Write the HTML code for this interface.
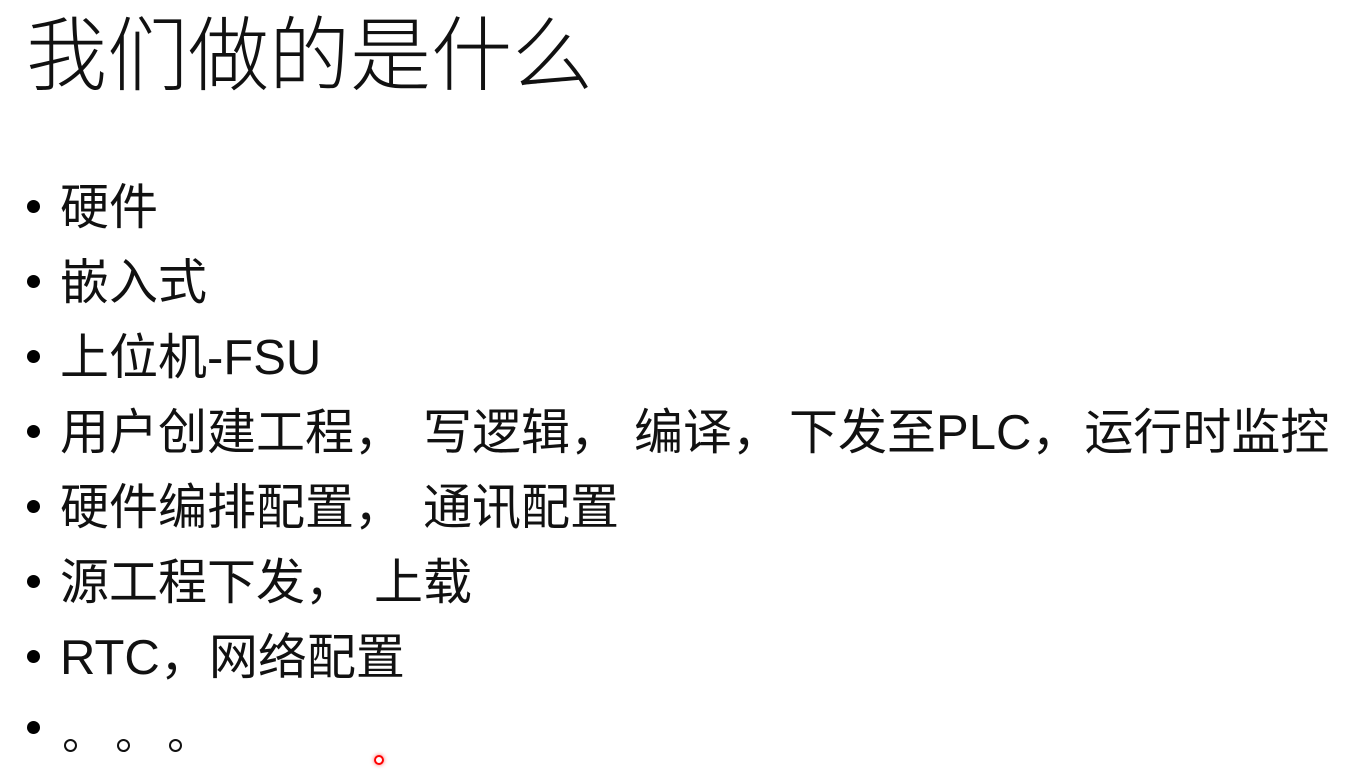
<!DOCTYPE html>
<html><head><meta charset="utf-8"><style>
html,body{margin:0;padding:0;background:#fff;width:1369px;height:772px;overflow:hidden;position:relative}
body{font-family:"Liberation Sans","Noto Sans CJK SC",sans-serif;color:#111}
.t{position:absolute;left:26px;top:9px;font-size:81px;line-height:96px;white-space:nowrap;font-weight:300}
.l{position:absolute;left:60px;font-size:49px;line-height:74px;height:74px;white-space:pre}
.b{position:absolute;left:27px;width:13px;height:13px;border-radius:50%;background:#000}
.o{position:absolute;width:9px;height:9px;border:2px solid #111;border-radius:50%}
.s{display:inline-block;width:20px}
</style></head><body>
<div class="t">我们做的是什么</div>
<div class="b" style="top:200px"></div><div class="l" style="top:171px">硬件</div>
<div class="b" style="top:275px"></div><div class="l" style="top:246px">嵌入式</div>
<div class="b" style="top:350px"></div><div class="l" style="top:321px">上位机-FSU</div>
<div class="b" style="top:425px"></div><div class="l" style="top:396px">用户创建工程，<span class="s"></span>写逻辑，<span class="s" style="width:15px"></span>编译，<span class="s" style="width:8px"></span>下发至PLC，<span class="s" style="width:4px"></span>运行时监控</div>
<div class="b" style="top:500px"></div><div class="l" style="top:471px">硬件编排配置，<span class="s"></span>通讯配置</div>
<div class="b" style="top:575px"></div><div class="l" style="top:546px">源工程下发，<span class="s"></span>上载</div>
<div class="b" style="top:650px"></div><div class="l" style="top:621px">RTC，<span class="s" style="width:0"></span>网络配置</div>
<div class="b" style="top:721px"></div>
<div class="o" style="left:64px;top:739px"></div>
<div class="o" style="left:117px;top:739px"></div>
<div class="o" style="left:169px;top:739px"></div>
<div style="position:absolute;left:374px;top:755px;width:6px;height:6px;border:2px solid #f00;border-radius:50%;box-shadow:0 0 4px #f66"></div>
</body></html>
